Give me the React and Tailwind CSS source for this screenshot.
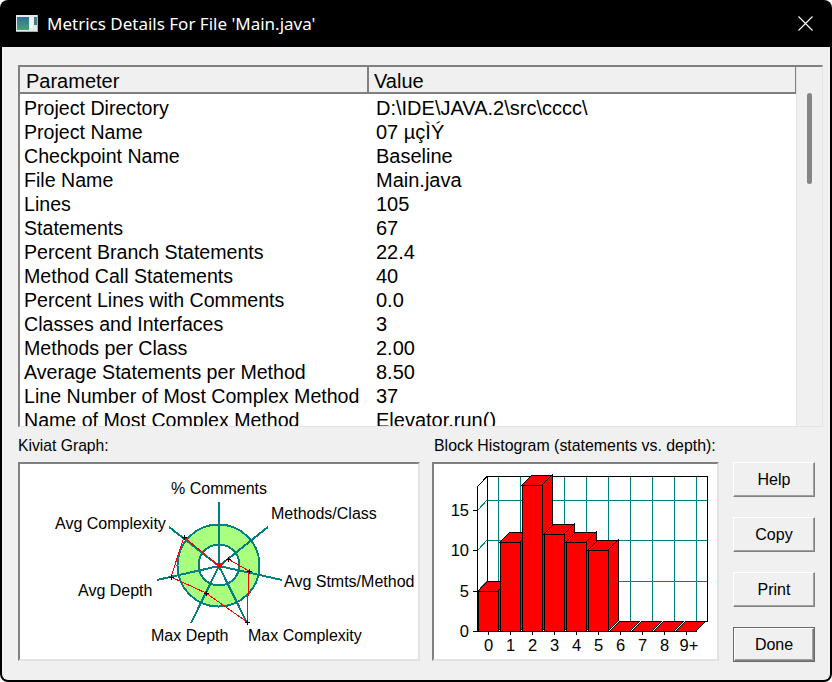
const rows = [
  ["Project Directory", "D:\\IDE\\JAVA.2\\src\\cccc\\"],
  ["Project Name", "07 µçÌÝ"],
  ["Checkpoint Name", "Baseline"],
  ["File Name", "Main.java"],
  ["Lines", "105"],
  ["Statements", "67"],
  ["Percent Branch Statements", "22.4"],
  ["Method Call Statements", "40"],
  ["Percent Lines with Comments", "0.0"],
  ["Classes and Interfaces", "3"],
  ["Methods per Class", "2.00"],
  ["Average Statements per Method", "8.50"],
  ["Line Number of Most Complex Method", "37"],
  ["Name of Most Complex Method", "Elevator.run()"],
];

const spokes = [
  [219, 502],
  [268, 527],
  [282, 580],
  [247, 623],
  [191, 623],
  [157, 580],
  [169, 527],
];

const kiviatPoints = [
  [219, 566],
  [228, 559],
  [249, 571],
  [247, 622],
  [206, 593],
  [171, 577],
  [184, 537],
];

const kiviatLabels = [
  { x: 171, y: 494, text: "% Comments" },
  { x: 271, y: 519, text: "Methods/Class" },
  { x: 284, y: 587, text: "Avg Stmts/Method" },
  { x: 248, y: 641, text: "Max Complexity" },
  { x: 151, y: 641, text: "Max Depth" },
  { x: 78, y: 596, text: "Avg Depth" },
  { x: 55, y: 529, text: "Avg Complexity" },
];

const bars = [5, 11, 18, 12, 11, 10, 0, 0, 0, 0];
const depthLabels = ["0", "1", "2", "3", "4", "5", "6", "7", "8", "9+"];

const KiviatGraph = () => (
  <svg width="402" height="199" viewBox="18 462 402 199" className="block">
    <g shapeRendering="crispEdges">
      <circle cx="218.5" cy="565.5" r="41" fill="#aaff7f" stroke="#008080" strokeWidth="2" />
      <circle cx="219" cy="565" r="20.5" fill="#fff" stroke="#008080" strokeWidth="2" />
      {spokes.map(([x, y], i) => (
        <line key={i} x1="219" y1="566" x2={x} y2={y} stroke="#008080" strokeWidth="2" />
      ))}
      <polygon
        points={kiviatPoints.map((p) => p.join(",")).join(" ")}
        fill="none"
        stroke="#ff0000"
        strokeWidth="1"
      />
      {kiviatPoints.slice(1).map(([x, y], i) => (
        <path key={i} d={`M${x - 2.5} ${y}H${x + 2.5}M${x} ${y - 2.5}V${y + 2.5}`} stroke="#000" strokeWidth="1" />
      ))}
      <polygon points="215,563 224,563 219.5,570" fill="#ff0000" />
    </g>
    {kiviatLabels.map((l) => (
      <text key={l.text} x={l.x} y={l.y} fontSize="16" fill="#000" fontFamily="Liberation Sans, Arial, sans-serif">
        {l.text}
      </text>
    ))}
  </svg>
);

const Histogram = () => {
  const base = 631;
  const unit = 8.1;
  return (
    <svg width="287" height="199" viewBox="432 462 287 199" className="block" shapeRendering="crispEdges">
      {[498, 520, 542, 564, 586, 608, 630, 652, 674, 696].map((x) => (
        <line key={x} x1={x} y1="476" x2={x} y2="621" stroke="#008080" />
      ))}
      {[500, 540, 581].map((y) => (
        <g key={y}>
          <line x1="487" y1={y} x2="707" y2={y} stroke="#008080" />
          <line x1="478" y1={y + 10} x2="487" y2={y} stroke="#008080" />
        </g>
      ))}
      <path d="M478 486L487.5 476H707.5V621.5H697" fill="none" stroke="#000" />
      <line x1="487.5" y1="476" x2="487.5" y2="590" stroke="#000" />
      <line x1="477.5" y1="486" x2="477.5" y2="632" stroke="#000" />
      {bars.map((v, i) => {
        const x = 478 + i * 22;
        const top = Math.round(base - v * unit);
        const r = x + 20;
        if (v === 0) {
          return (
            <g key={i}>
              <polygon points={`${x},${base} ${r},${base} ${r + 10},${base - 10} ${x + 10},${base - 10}`} fill="#ff0000" stroke="#000" />
              <line x1={x} y1={base - 1} x2={x + 9} y2={base - 10} stroke="#fff" strokeDasharray="2 1" />
            </g>
          );
        }
        return (
          <g key={i}>
            <polygon points={`${r},${top} ${r + 10},${top - 10} ${r + 10},${base - 10} ${r},${base}`} fill="#ff0000" stroke="#000" />
            <polygon points={`${x},${top} ${x + 10},${top - 10} ${r + 10},${top - 10} ${r},${top}`} fill="#ff0000" stroke="#000" />
            <rect x={x + 0.5} y={top + 0.5} width="20" height={base - top} fill="#ff0000" stroke="#000" />
          </g>
        );
      })}
      <line x1="477" y1="631.5" x2="697" y2="631.5" stroke="#000" />
      {[0, 5, 10, 15].map((v) => (
        <line key={v} x1="473" y1={Math.round(base - v * unit) + 0.5} x2="478" y2={Math.round(base - v * unit) + 0.5} stroke="#000" />
      ))}
      {bars.map((_, i) => (
        <line key={i} x1={488.5 + i * 22} y1="631" x2={488.5 + i * 22} y2="635" stroke="#000" />
      ))}
      <g fontSize="16.5" fill="#000" fontFamily="Liberation Sans, Arial, sans-serif">
        {[0, 5, 10, 15].map((v) => (
          <text key={v} x="469" y={base - v * unit + 6} textAnchor="end">
            {v}
          </text>
        ))}
        {depthLabels.map((l, i) => (
          <text key={l} x={i === 9 ? 689 : 488.5 + i * 22} y="651" textAnchor="middle">
            {l}
          </text>
        ))}
      </g>
    </svg>
  );
};

const DialogButton = ({ label, isDefault }) => (
  <button
    className={`w-[82px] h-[35px] bg-[#f0f0f0] text-[16px] text-black border border-t-white border-l-white border-r-[#808080] border-b-[#808080] shadow-[inset_-1px_-1px_0_#a0a0a0] ${
      isDefault ? "outline outline-1 -outline-offset-1 outline-[#696969] border-2 border-[#808080]" : ""
    }`}
  >
    {label}
  </button>
);

const App = () => {
  return (
    <div
      className="w-[832px] h-[682px] bg-white overflow-hidden"
      style={{ fontFamily: "'Liberation Sans', Arial, sans-serif" }}
    >
      <div className="w-full h-full bg-black rounded-lg flex flex-col px-[2px] pb-[2px]">
        <div className="h-[47px] shrink-0 flex items-center pl-[14px] pr-[17px] text-white">
          <svg width="22" height="17" viewBox="0 0 22 17" className="shrink-0">
            <defs>
              <linearGradient id="iconPanel" x1="0" y1="0" x2="0" y2="1">
                <stop offset="0" stopColor="#2f6f9f" />
                <stop offset="1" stopColor="#4f9f6f" />
              </linearGradient>
            </defs>
            <rect width="22" height="17" fill="#e4eaec" />
            <rect x="1" y="2" width="12" height="13" fill="url(#iconPanel)" />
            <rect x="14" y="2" width="3" height="11" fill="#f4f4ee" />
            <rect x="18" y="2" width="3" height="8" fill="#3f7f90" />
            <rect x="21" y="0" width="1" height="17" fill="#a8b0b4" />
            <rect x="0" y="16" width="22" height="1" fill="#a8b0b4" />
          </svg>
          <span className="ml-[9px] text-[17px] font-['Noto_Sans'] flex-1">Metrics Details For File 'Main.java'</span>
          <svg width="15" height="15" viewBox="0 0 15 15" stroke="#fff" strokeWidth="1.1">
            <path d="M0.5 0.5L14.5 14.5M14.5 0.5L0.5 14.5" />
          </svg>
        </div>

        <div className="flex-1 bg-[#f0f0f0] rounded-b-md flex flex-col pt-[18px] pl-[16px] pr-[7px]">
          {/* parameter list */}
          <div className="w-[805px] h-[362px] shrink-0 border-2 border-t-[#808080] border-l-[#808080] border-r-[#e3e3e3] border-b-[#e3e3e3] border-r-1 border-b-1 bg-white flex flex-col overflow-hidden relative">
            <div className="h-[27px] shrink-0 flex bg-[#f0f0f0] text-[20px] leading-[28px] text-black">
              <div className="w-[349px] border-r-2 border-b-2 border-[#808080] pl-[6px]">Parameter</div>
              <div className="w-[428px] border-r-2 border-b-2 border-[#808080] pl-[5px]">Value</div>
            </div>
            <div className="flex-1 overflow-hidden pt-[2px] pr-[26px]">
              {rows.map(([name, value]) => (
                <div key={name} className="flex h-[24px] text-[19.6px] leading-[24px] text-black whitespace-nowrap">
                  <span className="w-[356px] pl-[4px]">{name}</span>
                  <span className="text-[20px]">{value}</span>
                </div>
              ))}
            </div>
            <div className="absolute right-0 top-0 bottom-0 w-[26px] bg-[#f0f0f0] border-l border-[#e3e3e3] flex justify-center">
              <div className="w-[5px] h-[91px] mt-[26px] rounded-full bg-[#858585]" />
            </div>
          </div>

          <div className="flex mt-[8px]">
            <div className="w-[402px]">
              <div className="h-[27px] text-[15.7px] leading-[22px] text-black">Kiviat Graph:</div>
              <div className="w-[402px] h-[199px] border-2 border-t-[#808080] border-l-[#808080] border-r-[#e3e3e3] border-b-[#e3e3e3] bg-white overflow-hidden">
                <div className="-m-[2px]">
                  <KiviatGraph />
                </div>
              </div>
            </div>
            <div className="w-[287px] ml-[12px]">
              <div className="h-[27px] pl-[2px] text-[15.9px] leading-[22px] text-black whitespace-nowrap">
                Block Histogram (statements vs. depth):
              </div>
              <div className="w-[287px] h-[199px] border-2 border-t-[#808080] border-l-[#808080] border-r-[#e3e3e3] border-b-[#e3e3e3] bg-white overflow-hidden">
                <div className="-m-[2px]">
                  <Histogram />
                </div>
              </div>
            </div>
            <div className="ml-[14px] pt-[27px] flex flex-col gap-[20px]">
              <DialogButton label="Help" />
              <DialogButton label="Copy" />
              <DialogButton label="Print" />
              <DialogButton label="Done" isDefault />
            </div>
          </div>
        </div>
      </div>
    </div>
  );
};

export default App;
